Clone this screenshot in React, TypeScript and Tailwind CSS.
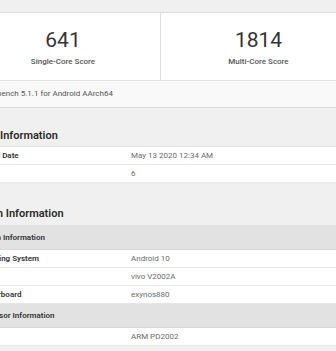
import React from 'react';

const scores = [
  { value: '641', label: 'Single-Core Score' },
  { value: '1814', label: 'Multi-Core Score' },
];

type Row = { kind: 'row'; key: string; value: string } | { kind: 'sub'; title: string };

const resultRows: Row[] = [
  { kind: 'row', key: 'Upload Date', value: 'May 13 2020 12:34 AM' },
  { kind: 'row', key: 'Views', value: '6' },
];

const systemRows: Row[] = [
  { kind: 'sub', title: 'System Information' },
  { kind: 'row', key: 'Operating System', value: 'Android 10' },
  { kind: 'row', key: 'Model', value: 'vivo V2002A' },
  { kind: 'row', key: 'Motherboard', value: 'exynos880' },
  { kind: 'sub', title: 'Processor Information' },
  { kind: 'row', key: 'Name', value: 'ARM PD2002' },
];

const InfoTable = ({ rows }: { rows: Row[] }) => (
  <div className="bg-white border-t border-[#e3e3e3]">
    {rows.map((r, i) =>
      r.kind === 'sub' ? (
        <div
          key={i}
          className="h-[24px] flex items-center pl-[9px] bg-[#e2e2e2] border-b border-[#d9d9d9] text-[8px] font-semibold text-[#333]"
        >
          {r.title}
        </div>
      ) : (
        <div key={i} className="h-[18px] flex items-center border-b border-[#e6e6e6] text-[8px]">
          <div className="w-[166px] pl-[10px] font-semibold text-[#333]">{r.key}</div>
          <div className="flex-1 text-[#6b6b6b]">{r.value}</div>
        </div>
      )
    )}
  </div>
);

const SectionHeader = ({ title, cls }: { title: string; cls: string }) => (
  <div className={`${cls} flex items-end pl-[1px] text-[11px] font-semibold text-[#2b2b2b]`}>
    {title}
  </div>
);

export default function App() {
  return (
    <div className="w-[336px] h-[351px] overflow-hidden bg-[#f0f0f0] font-['Roboto',sans-serif]">
      <div className="ml-[-35px] w-[392px] pt-[12px]">
        {/* Scores */}
        <div className="bg-white border border-[#dcdcdc]">
          <div className="grid grid-cols-2 h-[67px]">
            {scores.map((s, i) => (
              <div
                key={s.label}
                className={`flex flex-col items-center pt-[15px] ${i === 0 ? 'border-r border-[#dcdcdc]' : ''}`}
              >
                <div className="text-[21px] leading-[24px] text-[#333]">{s.value}</div>
                <div className="mt-[4px] text-[8px] leading-[12px] font-medium text-[#555]">{s.label}</div>
              </div>
            ))}
          </div>
          <div className="h-[27px] flex items-center pl-[13px] border-t border-[#e3e3e3] bg-[#f9f9f9] text-[8px] text-[#555]">
            Geekbench 5.1.1 for Android AArch64
          </div>
        </div>

        <SectionHeader title="Result Information" cls="h-[38px] pb-[2px]" />
        <InfoTable rows={resultRows} />

        <SectionHeader title="System Information" cls="h-[42px] pb-[3px]" />
        <InfoTable rows={systemRows} />
      </div>
    </div>
  );
}
